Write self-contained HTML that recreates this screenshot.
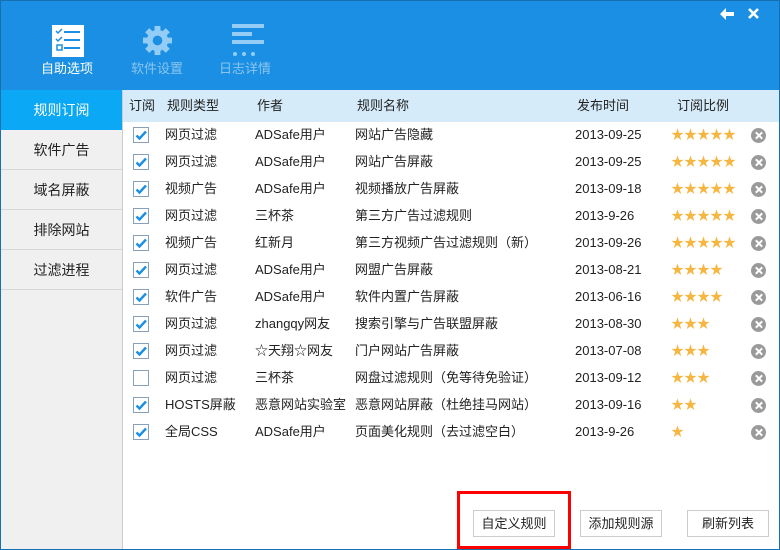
<!DOCTYPE html><html><head><meta charset="utf-8"><style>
*{margin:0;padding:0;box-sizing:border-box}
body{width:780px;height:550px;overflow:hidden;font-family:"Liberation Sans","Noto Sans CJK SC",sans-serif;font-size:13px;color:#222;background:#fff;position:relative}
.win{position:absolute;left:0;top:0;width:780px;height:550px;border:1px solid #1670b0;}
.hdr{position:absolute;left:0;top:0;width:780px;height:90px;background:#1a8fe3}
.tab{position:absolute;top:61px;font-size:13px;width:80px;text-align:center;line-height:16px}
.side{position:absolute;left:1px;top:90px;width:122px;height:459px;background:#f0f0f0;border-right:1px solid #ccc}
.si{height:40px;line-height:40px;text-align:center;font-size:14px;border-bottom:1px solid #d6d6d6;color:#222}
.si.a{background:#0aa8f5;color:#fff;border-bottom:none}
.th{position:absolute;left:123px;top:90px;width:656px;height:32px;background:#d6ebf9}
.c{position:absolute;white-space:nowrap;font-size:13px;line-height:16px;height:16px}
.cb{position:absolute;left:133px;width:16px;height:16px;border:1px solid #8aa0b8;background:#fff}
.cb svg{position:absolute;left:0px;top:0px}
.st{position:absolute;left:671px;color:#f5b642;font-size:13px;line-height:16px;letter-spacing:0px}
.x{position:absolute;left:751px;width:15px;height:15px;border-radius:50%;background:#9a9a9a}
.x:before,.x:after{content:"";position:absolute;top:3px;width:2px;height:9px;background:#fff;transform:rotate(45deg);left:6.5px}
.x:after{transform:rotate(-45deg)}
.btn{position:absolute;top:510px;height:27px;border:1px solid #ccc;background:#fff;text-align:center;line-height:25px;font-size:13px}
</style></head><body>
<div class="hdr">
<svg style="position:absolute;left:52px;top:25px" width="32" height="32"><rect width="32" height="32" fill="#fff"/><g stroke="#1a8fe3" stroke-width="2"><line x1="12" y1="7" x2="28" y2="7"/><line x1="12" y1="15" x2="28" y2="15"/><line x1="12" y1="23" x2="28" y2="23"/><rect x="5" y="20" width="5" height="5" fill="none" stroke-width="1.5"/><path d="M4 6l2 2 4-4M4 14l2 2 4-4" fill="none" stroke-width="1.5"/></g></svg>
<div class="tab" style="left:27px;color:#fff">自助选项</div>
<svg style="position:absolute;left:142px;top:25px" width="31" height="31" viewBox="0 0 32 32"><g fill="#93cdf6"><circle cx="16" cy="16" r="11"/><g><rect x="13" y="1" width="6" height="30"/><rect x="13" y="1" width="6" height="30" transform="rotate(45 16 16)"/><rect x="13" y="1" width="6" height="30" transform="rotate(90 16 16)"/><rect x="13" y="1" width="6" height="30" transform="rotate(135 16 16)"/></g></g><circle cx="16" cy="16" r="5" fill="#1a8fe3"/></svg>
<div class="tab" style="left:117px;color:#8cc5ef">软件设置</div>
<svg style="position:absolute;left:232px;top:24px" width="32" height="33"><g fill="#93cdf6"><rect x="0" y="0" width="32" height="4"/><rect x="0" y="8" width="20" height="4"/><rect x="0" y="16" width="32" height="4"/><circle cx="3" cy="30" r="2"/><circle cx="12" cy="30" r="2"/><circle cx="21" cy="30" r="2"/></g></svg>
<div class="tab" style="left:205px;color:#8cc5ef">日志详情</div>
<svg style="position:absolute;left:720px;top:8px" width="14" height="12"><path d="M0 6L6 0V4H14V8H6V12Z" fill="#fff"/></svg>
<svg style="position:absolute;left:748px;top:8px" width="11" height="11"><path d="M1 1L10 10M10 1L1 10" stroke="#fff" stroke-width="2.6"/></svg>
</div>
<div class="side">
<div class="si a">规则订阅</div><div class="si">软件广告</div><div class="si">域名屏蔽</div><div class="si">排除网站</div><div class="si">过滤进程</div>
</div>
<div class="th"></div>
<div class="c" style="left:129px;top:98px">订阅</div>
<div class="c" style="left:167px;top:98px">规则类型</div>
<div class="c" style="left:257px;top:98px">作者</div>
<div class="c" style="left:357px;top:98px">规则名称</div>
<div class="c" style="left:577px;top:98px">发布时间</div>
<div class="c" style="left:677px;top:98px">订阅比例</div>
<div id="rows"></div>
<div class="btn" style="left:473px;width:82px">自定义规则</div>
<div class="btn" style="left:580px;width:82px">添加规则源</div>
<div class="btn" style="left:687px;width:82px">刷新列表</div>
<div style="position:absolute;left:457px;top:491px;width:114px;height:58px;border:3px solid #f00"></div>
<div class="win"></div>
<script>
var d=[["网页过滤","ADSafe用户","网站广告隐藏","2013-09-25",5,1],["网页过滤","ADSafe用户","网站广告屏蔽","2013-09-25",5,1],["视频广告","ADSafe用户","视频播放广告屏蔽","2013-09-18",5,1],["网页过滤","三杯茶","第三方广告过滤规则","2013-9-26",5,1],["视频广告","红新月","第三方视频广告过滤规则（新）","2013-09-26",5,1],["网页过滤","ADSafe用户","网盟广告屏蔽","2013-08-21",4,1],["软件广告","ADSafe用户","软件内置广告屏蔽","2013-06-16",4,1],["网页过滤","zhangqy网友","搜索引擎与广告联盟屏蔽","2013-08-30",3,1],["网页过滤","☆天翔☆网友","门户网站广告屏蔽","2013-07-08",3,1],["网页过滤","三杯茶","网盘过滤规则（免等待免验证）","2013-09-12",3,0],["HOSTS屏蔽","恶意网站实验室","恶意网站屏蔽（杜绝挂马网站）","2013-09-16",2,1],["全局CSS","ADSafe用户","页面美化规则（去过滤空白）","2013-9-26",1,1]];
var h="";d.forEach(function(r,i){var y=135+27*i;
h+='<div class="cb" style="top:'+(y-8)+'px">'+(r[5]?'<svg width="14" height="14"><path d="M2.5 7.5l3 3L12 3.5" stroke="#1a8fe3" stroke-width="2.4" fill="none"/></svg>':'')+'</div>';
h+='<div class="c" style="left:165px;top:'+(y-8)+'px">'+r[0]+'</div><div class="c" style="left:255px;top:'+(y-8)+'px">'+r[1]+'</div><div class="c" style="left:355px;top:'+(y-8)+'px">'+r[2]+'</div><div class="c" style="left:575px;top:'+(y-8)+'px">'+r[3]+'</div>';
h+='<div class="st" style="top:'+(y-8)+'px">'+"★★★★★".slice(0,r[4])+'</div><div class="x" style="top:'+(y-7)+'px"></div>';});
document.getElementById("rows").innerHTML=h;
</script>
</body></html>
